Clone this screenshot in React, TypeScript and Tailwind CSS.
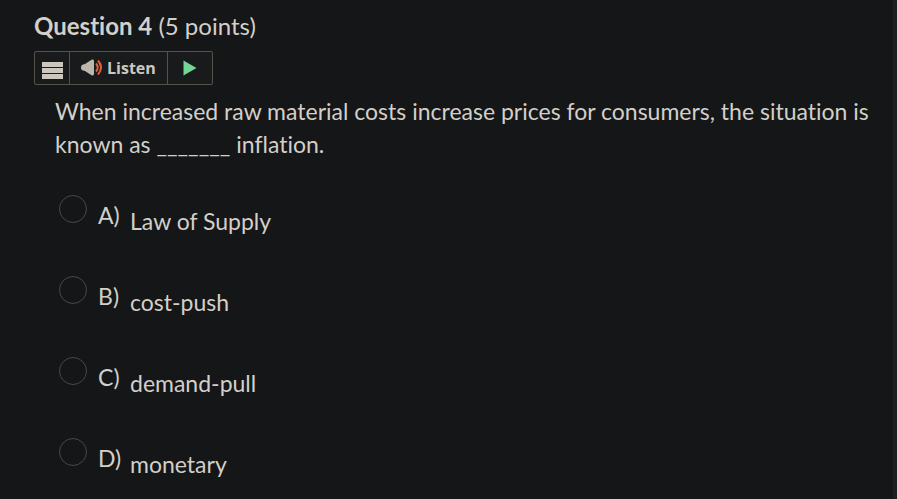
import { useState } from 'react'

const options = [
  { letter: 'A', text: 'Law of Supply' },
  { letter: 'B', text: 'cost-push' },
  { letter: 'C', text: 'demand-pull' },
  { letter: 'D', text: 'monetary' },
]

function ReadSpeaker() {
  return (
    <div className="flex h-[34px] w-fit rounded-xs border border-[#57534b] bg-[#181a1b]">
      <button type="button" aria-label="Menu" className="flex w-[35px] items-center justify-center border-r border-[#57534b] pt-1">
        <svg width="21" height="17" viewBox="0 0 21 17" fill="#ccc7be">
          <rect y="0" width="21" height="5" />
          <rect y="6" width="21" height="5" />
          <rect y="12" width="21" height="5" />
        </svg>
      </button>
      <button type="button" className="flex items-center border-r border-[#57534b] px-[11px] font-['Open_Sans',sans-serif] text-base leading-4 font-bold text-[#ccc8c0]">
        <svg width="22" height="18" viewBox="0 0 22 18" className="mr-1" aria-hidden="true">
          <path d="M0 8Q0 6 2 5.500L4 5L10.500 0.800Q13 0 13 2V15Q13 17 10.500 16.200L4 12L2 11.500Q0 11 0 9Z" fill="#bdb6aa" />
          <path d="M15 4.500Q18.500 8.500 15 12.500" fill="none" stroke="#e0603c" strokeWidth="2" />
          <path d="M17 1.500Q23 8.500 17 15.500" fill="none" stroke="#e0603c" strokeWidth="2" />
        </svg>
        Listen
      </button>
      <button type="button" aria-label="Play" className="flex w-11 items-center justify-center">
        <svg width="14" height="16" viewBox="0 0 14 16">
          <path d="M0.500 0.500L13.500 8L0.500 15.500Z" fill="#74d694" />
        </svg>
      </button>
    </div>
  )
}

export default function App() {
  const [answer, setAnswer] = useState('')

  return (
    <div className="min-h-screen border-r-4 border-[#1d1f20] bg-[#141617] font-[Lato,sans-serif] text-[23px] text-[#d3cfc9] [font-variant-ligatures:none]">
      <main className="pt-[10px] pl-[34px]">
        <h2 className="mb-[9px] text-2xl leading-8">
          <strong className="font-bold">Question 4</strong> (5 points)
        </h2>
        <ReadSpeaker />

        <div role="radiogroup" aria-labelledby="prompt" className="pt-[10px] pl-[21px]">
          <p id="prompt" className="mb-[34px] leading-[33px]">
            When increased raw material costs increase prices for consumers, the situation is known as _______ inflation.
          </p>
          {options.map((option) => (
            <label key={option.letter} className="flex h-[81px] items-start pl-1 leading-8 last:h-auto">
              <input
                type="radio"
                name="answer"
                value={option.letter}
                checked={answer === option.letter}
                onChange={() => setAnswer(option.letter)}
                className="size-7 shrink-0 appearance-none rounded-full border border-[#4c4840] checked:border-8 checked:border-[#ccc7be]"
              />
              <span className="ml-[11px] w-8 pt-1">{option.letter})</span>
              <span className="pt-[10px]">{option.text}</span>
            </label>
          ))}
        </div>
      </main>
    </div>
  )
}
